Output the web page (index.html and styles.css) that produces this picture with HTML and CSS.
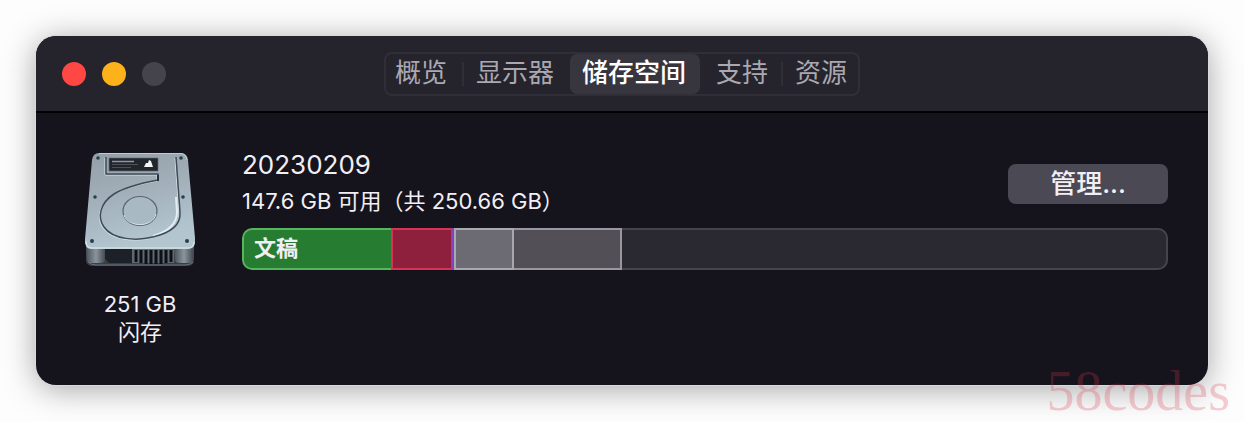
FILE: index.html
```html
<!DOCTYPE html>
<html lang="zh-CN">
<head>
<meta charset="utf-8">
<title>储存空间</title>
<link rel="stylesheet" href="styles.css">
</head>
<body>
<div class="window">
  <header class="titlebar">
    <div class="lights">
      <button class="light light-close" type="button" aria-label="关闭"></button>
      <button class="light light-min" type="button" aria-label="最小化"></button>
      <button class="light light-zoom" type="button" aria-label="缩放" disabled></button>
    </div>
    <nav class="tabs">
      <button class="tab" type="button">概览</button>
      <button class="tab divided" type="button">显示器</button>
      <button class="tab active" type="button" aria-current="page">储存空间</button>
      <button class="tab" type="button">支持</button>
      <button class="tab divided" type="button">资源</button>
    </nav>
  </header>
  <main class="content">
    <section class="drive">
      <svg class="drive-icon" viewBox="0 0 112 116" aria-hidden="true">
        <defs>
          <linearGradient id="top" x1="0" y1="0" x2="0.3" y2="1">
            <stop offset="0" stop-color="#929da7"/>
            <stop offset="0.5" stop-color="#a2b0ba"/>
            <stop offset="1" stop-color="#b3c6d0"/>
          </linearGradient>
          <linearGradient id="side" x1="0" y1="0" x2="0" y2="1">
            <stop offset="0" stop-color="#525961"/>
            <stop offset="1" stop-color="#363b42"/>
          </linearGradient>
          <linearGradient id="post" x1="0" y1="0" x2="1" y2="0">
            <stop offset="0" stop-color="#50575f"/>
            <stop offset="0.5" stop-color="#8b949d"/>
            <stop offset="1" stop-color="#454b52"/>
          </linearGradient>
        </defs>
        <path d="M2 92H110V108Q110 114 103 114H9Q2 114 2 108Z" fill="url(#side)"/>
        <path d="M21 97H48V111H25L20 106Z" fill="#1c2027"/>
        <rect x="3" y="94" width="18" height="17" rx="4" fill="url(#post)"/>
        <rect x="91" y="94" width="18" height="17" rx="4" fill="url(#post)"/>
        <rect x="48" y="97" width="42" height="14" fill="#616971"/>
        <path d="M52 98V110M57 98V111M62 98V112M67 98V112M72 98V112M77 98V112M82 98V111M87 98V110" stroke="#0d1116" stroke-width="3"/>
        <path d="M4 110Q7 113 12 113H101Q106 113 109 110" fill="none" stroke="#6d767f"/>
        <path d="M15 1H97Q103 1 104 8L111 86Q112 97 104 97H8Q0 97 1 87L8 8Q9 1 15 1Z" fill="url(#top)"/>
        <path d="M2 89Q2 96 8 96H104Q110 96 110 90" fill="none" stroke="#d1dee4" stroke-width="1.5"/>
        <path d="M15 1.5H97Q102 2 103 8" fill="none" stroke="#c2cbd1"/>
        <path d="M22 5V22H74V28C58 31 41 35 30 42C16 51 13 65 20 75C29 88 53 89 69 85C86 81 97 73 96 60L92 5" transform="translate(-1 1)" fill="none" stroke="#d3e0e6"/>
        <path d="M92 45L93 60Q93 77 69 84" fill="none" stroke="#e4eef2" stroke-width="2"/>
        <path d="M22 5V22H74V28C58 31 41 35 30 42C16 51 13 65 20 75C29 88 53 89 69 85C86 81 97 73 96 60L92 5" fill="none" stroke="#3f4b56" stroke-width="1.5"/>
        <path d="M74 23V29" stroke="#22303a" stroke-width="2"/>
        <ellipse cx="56" cy="59" rx="17" ry="14.5" fill="#a9b9c3" stroke="#586570" stroke-width="1.2"/>
        <path d="M40 63C44 76 69 76 72 62" fill="none" stroke="#d8e4e9"/>
        <rect x="25" y="6" width="49" height="13" fill="#22262c" stroke="#5e6971" stroke-width=".7"/>
        <path d="M28 9.500H50" stroke="#8f959b" stroke-width="1.500"/>
        <path d="M28 12.500H54M28 15.500H47" stroke="#4b5259"/>
        <path d="M60 15L62 11L64 11L65 8L67 9L69 15Z" fill="#f2f4f5"/>
        <g fill="#253f4b">
          <circle cx="14" cy="6" r="1.800"/><circle cx="97" cy="6" r="1.800"/>
          <circle cx="11" cy="45" r="1.800"/><circle cx="99" cy="45" r="1.800"/>
          <circle cx="8" cy="89" r="2"/><circle cx="103" cy="89" r="2"/>
        </g>
      </svg>
      <div class="drive-label">251 GB<br>闪存</div>
    </section>
    <section class="volume">
      <div class="volume-head">
        <div class="volume-text">
          <h1 class="volume-name">20230209</h1>
          <p class="volume-free">147.6 GB 可用（共 250.66 GB）</p>
        </div>
        <button class="manage" type="button">管理...</button>
      </div>
      <div class="usage">
        <div class="segment docs" style="width:16.1%">文稿</div>
        <div class="segment apps" style="width:6.5%"></div>
        <div class="segment media" style="width:0.3%"></div>
        <div class="segment system" style="width:6.5%"></div>
        <div class="segment other" style="width:11.6%"></div>
      </div>
    </section>
  </main>
</div>
<div class="watermark">58codes</div>
</body>
</html>
```
FILE: styles.css
```css
* {
  box-sizing: border-box;
}

body {
  position: relative;
  margin: 0;
  padding: 36px;
  background: #fdfdfd;
  color: #f1eff5;
  font-family: Inter, "Noto Sans CJK SC", sans-serif;
  overflow: hidden;
}

button {
  margin: 0;
  padding: 0;
  border: 0;
  background: none;
  color: inherit;
  font: inherit;
}

.window {
  border-radius: 20px;
  background: #15131c;
  box-shadow: 0 0 0 1px #d9d9de, 0 4px 32px rgba(0, 0, 0, 0.36);
  overflow: hidden;
}

.titlebar {
  display: grid;
  grid-template-columns: 1fr auto 1fr;
  align-items: center;
  height: 77px;
  padding: 0 26px;
  border-bottom: 2px solid #020205;
  background: #25232c;
}

.lights {
  display: flex;
  gap: 16px;
}

.light {
  width: 24px;
  height: 24px;
  border-radius: 50%;
}

.light-close {
  background: #ff4743;
}

.light-min {
  background: #fdb21b;
}

.light-zoom {
  background: #45434c;
}

.tabs {
  display: flex;
  border: 2px solid #302e37;
  border-radius: 8px;
  color: #aaa8b1;
  font-size: 26px;
  line-height: 38px;
}

.tab {
  position: relative;
  padding: 0 13px 2px 16px;
}

.tab:first-child {
  padding: 0 15px 2px 9px;
}

.divided {
  padding: 0 16px 2px 14px;
}

.tab:last-child {
  padding-right: 11px;
}

.divided::before {
  content: "";
  position: absolute;
  top: 8px;
  bottom: 8px;
  left: 0;
  width: 2px;
  background: #302e37;
}

.active {
  padding: 0 14px 2px 12px;
  border-radius: 7px;
  background: #37353e;
  color: #fff;
  font-weight: 500;
}

.content {
  display: flex;
  gap: 46px;
  padding: 39px 40px 39px 48px;
}

.drive {
  flex: none;
  width: 112px;
  text-align: center;
}

.drive-icon {
  display: block;
  width: 112px;
  height: 116px;
}

.drive-label {
  margin-top: 22px;
  font-size: 22px;
  line-height: 28px;
}

.volume {
  flex: 1;
  min-width: 0;
}

.volume-head {
  display: flex;
  justify-content: space-between;
  align-items: center;
  height: 64px;
}

.volume-text {
  padding-bottom: 3px;
}

.volume-name {
  margin: 0;
  font-size: 26px;
  font-weight: 400;
  line-height: 36px;
}

.volume-free {
  margin: 0;
  font-size: 22px;
  line-height: 36px;
}

.manage {
  width: 160px;
  height: 40px;
  border-radius: 8px;
  background: #4b4953;
  font-size: 26px;
  font-weight: 500;
  line-height: 36px;
}

.usage {
  display: flex;
  height: 42px;
  margin-top: 12px;
  border-radius: 10px;
  background: #2a2831;
  box-shadow: inset 0 0 0 2px #45434c;
  overflow: hidden;
}

.segment {
  border: 2px solid;
  border-left-width: 0;
}

.docs {
  padding-left: 10px;
  border: 2px solid #55b65e;
  border-right: 0;
  border-radius: 10px 0 0 10px;
  background: #267d31;
  font-size: 22px;
  font-weight: 700;
  line-height: 36px;
}

.apps {
  border-left-width: 2px;
  border-right-width: 0;
  border-color: #d53458;
  background: #8e203e;
}

.media {
  border: 0;
  background: #8342c2;
}

.system {
  border-left-width: 2px;
  border-color: #a9a7b0;
  background: #6c6a73;
}

.other {
  border-color: #99979f;
  background: #525056;
}

.watermark {
  position: absolute;
  right: 14px;
  bottom: 0;
  color: rgba(220, 55, 75, 0.25);
  font-family: "Liberation Serif", serif;
  font-size: 56px;
  line-height: 60px;
}
```
